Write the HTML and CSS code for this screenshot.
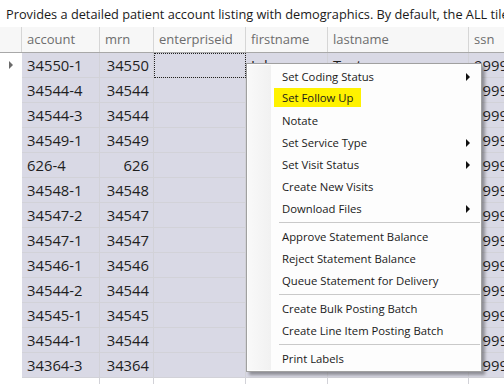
FILE: index.html
```html
<!DOCTYPE html>
<html>
<head>
<meta charset="utf-8">
<link rel="stylesheet" href="styles.css">
</head>
<body>
<div class="page">
  <div class="desc">Provides a detailed patient account listing with demographics. By default, the ALL tile will display all accounts</div>
  <div class="grid">
    <div class="row hdr">
      <div class="c rh"></div>
      <div class="c acc">account</div>
      <div class="c mrn">mrn</div>
      <div class="c ent">enterpriseid</div>
      <div class="c fn">firstname</div>
      <div class="c ln">lastname</div>
      <div class="c ssn">ssn</div>
    </div>
    <div class="row sel"><div class="c rh"><span class="cur"></span></div><div class="c acc">34550-1</div><div class="c mrn">34550</div><div class="c ent focus"></div><div class="c fn">John</div><div class="c ln">Test</div><div class="c ssn">999999999</div></div>
    <div class="row sel"><div class="c rh"></div><div class="c acc">34544-4</div><div class="c mrn">34544</div><div class="c ent"></div><div class="c fn">Jane</div><div class="c ln">Test</div><div class="c ssn">999999999</div></div>
    <div class="row sel"><div class="c rh"></div><div class="c acc">34544-3</div><div class="c mrn">34544</div><div class="c ent"></div><div class="c fn">Jane</div><div class="c ln">Test</div><div class="c ssn">999999999</div></div>
    <div class="row sel"><div class="c rh"></div><div class="c acc">34549-1</div><div class="c mrn">34549</div><div class="c ent"></div><div class="c fn">Mark</div><div class="c ln">Test</div><div class="c ssn">999999999</div></div>
    <div class="row sel"><div class="c rh"></div><div class="c acc">626-4</div><div class="c mrn">626</div><div class="c ent"></div><div class="c fn">Mary</div><div class="c ln">Test</div><div class="c ssn">999999999</div></div>
    <div class="row sel"><div class="c rh"></div><div class="c acc">34548-1</div><div class="c mrn">34548</div><div class="c ent"></div><div class="c fn">Paul</div><div class="c ln">Test</div><div class="c ssn">999999999</div></div>
    <div class="row sel"><div class="c rh"></div><div class="c acc">34547-2</div><div class="c mrn">34547</div><div class="c ent"></div><div class="c fn">Anna</div><div class="c ln">Test</div><div class="c ssn">999999999</div></div>
    <div class="row sel"><div class="c rh"></div><div class="c acc">34547-1</div><div class="c mrn">34547</div><div class="c ent"></div><div class="c fn">Anna</div><div class="c ln">Test</div><div class="c ssn">999999999</div></div>
    <div class="row sel"><div class="c rh"></div><div class="c acc">34546-1</div><div class="c mrn">34546</div><div class="c ent"></div><div class="c fn">Luke</div><div class="c ln">Test</div><div class="c ssn">999999999</div></div>
    <div class="row sel"><div class="c rh"></div><div class="c acc">34544-2</div><div class="c mrn">34544</div><div class="c ent"></div><div class="c fn">Jane</div><div class="c ln">Test</div><div class="c ssn">999999999</div></div>
    <div class="row sel"><div class="c rh"></div><div class="c acc">34545-1</div><div class="c mrn">34545</div><div class="c ent"></div><div class="c fn">Ruth</div><div class="c ln">Test</div><div class="c ssn">999999999</div></div>
    <div class="row sel"><div class="c rh"></div><div class="c acc">34544-1</div><div class="c mrn">34544</div><div class="c ent"></div><div class="c fn">Jane</div><div class="c ln">Test</div><div class="c ssn">999999999</div></div>
    <div class="row sel"><div class="c rh"></div><div class="c acc">34364-3</div><div class="c mrn">34364</div><div class="c ent"></div><div class="c fn">Adam</div><div class="c ln">Test</div><div class="c ssn">999999999</div></div>
    <div class="row"><div class="c rh"></div><div class="c acc"></div><div class="c mrn"></div><div class="c ent"></div><div class="c fn"></div><div class="c ln"></div><div class="c ssn"></div></div>
  </div>

  <div class="menu">
    <div class="gutter"></div>
    <div class="mi"><span>Set Coding Status</span><i class="arr"></i></div>
    <div class="mi"><span class="hl">Set Follow Up</span></div>
    <div class="mi"><span>Notate</span></div>
    <div class="mi"><span>Set Service Type</span><i class="arr"></i></div>
    <div class="mi"><span>Set Visit Status</span><i class="arr"></i></div>
    <div class="mi"><span>Create New Visits</span></div>
    <div class="mi"><span>Download Files</span><i class="arr"></i></div>
    <div class="sep"></div>
    <div class="mi"><span>Approve Statement Balance</span></div>
    <div class="mi"><span>Reject Statement Balance</span></div>
    <div class="mi"><span>Queue Statement for Delivery</span></div>
    <div class="sep"></div>
    <div class="mi"><span>Create Bulk Posting Batch</span></div>
    <div class="mi"><span>Create Line Item Posting Batch</span></div>
    <div class="sep"></div>
    <div class="mi"><span>Print Labels</span></div>
  </div>
</div>
</body>
</html>
```
FILE: styles.css
```css
* { box-sizing: border-box; }
html, body { margin: 0; padding: 0; background: #fff; }
body { font-family: "Open Sans", "Noto Sans", sans-serif; overflow: hidden; width: 504px; height: 384px; }
.page { position: relative; width: 504px; height: 384px; overflow: hidden; }

.desc {
  height: 27px;
  padding: 5px 0 0 6px;
  font-size: 12.75px;
  line-height: 18px;
  color: #1a1a1a;
  white-space: nowrap;
  overflow: hidden;
}

.grid { width: 540px; }
.row { display: flex; height: 25px; }
.c {
  flex: none;
  height: 25px;
  padding-left: 5px;
  font-size: 14.8px;
  line-height: 24px;
  color: #1e1e1e;
  white-space: nowrap;
  overflow: hidden;
  border-right: 1px solid #d2d2d8;
  border-bottom: 1px solid #d2d2d8;
}
.rh { width: 22px; border: none; position: relative; background: #fff; padding: 0; }
.acc { width: 78px; }
.mrn { width: 54px; text-align: right; padding-right: 4px; }
.ent { width: 92px; }
.fn { width: 82px; }
.ln { width: 141px; }
.ssn { width: 71px; }

.hdr { height: 26px; background: #f7f7f7; border-bottom: 1px solid #a8a8a8; }
.hdr .c {
  height: 25px;
  font-size: 13px;
  line-height: 25px;
  color: #6d6d6d;
  border-bottom: none;
  border-right: 1px solid #d6d6d6;
  background: #f7f7f7;
  text-align: left;
}
.hdr .rh { background: #f7f7f7; border-right: 1px solid #d6d6d6; }

.sel .c:not(.rh) { background: #d9d9e5; }
.focus { outline: 1px dotted #222; outline-offset: -1px; }

.cur {
  position: absolute;
  left: 9px; top: 8px;
  width: 0; height: 0;
  border-top: 4px solid transparent;
  border-bottom: 4px solid transparent;
  border-left: 4px solid #6a6a6a;
}

.menu {
  position: absolute;
  left: 246px; top: 63px;
  width: 236px; height: 309px;
  background: #fdfdfd;
  border: 1px solid #a0a0a0;
  padding: 2px 1px 1px 1px;
  box-shadow: 3px 3px 3px rgba(0,0,0,0.35);
  font-size: 11.3px;
  color: #1a1a1a;
}
.gutter {
  position: absolute;
  left: 1px; top: 1px; bottom: 1px;
  width: 23px;
  background: linear-gradient(to right, #f9f9f9, #f1f1f1);
}
.mi {
  position: relative;
  height: 22px;
  line-height: 22px;
  padding-left: 34px;
  white-space: nowrap;
}
.mi span { display: inline-block; }
.hl {
  background: #fff200;
  margin-left: -8px;
  padding: 0 8px 0 8px;
  height: 19px;
  line-height: 20px;
  vertical-align: top;
}
.arr {
  position: absolute;
  right: 10px; top: 7px;
  width: 0; height: 0;
  border-top: 4px solid transparent;
  border-bottom: 4px solid transparent;
  border-left: 4px solid #111;
}
.sep {
  position: relative;
  height: 6px;
  margin-left: 31px;
}
.sep::after {
  content: "";
  position: absolute;
  left: 0; right: 0; top: 2px;
  height: 1px;
  background: #c9c9c9;
}
```
